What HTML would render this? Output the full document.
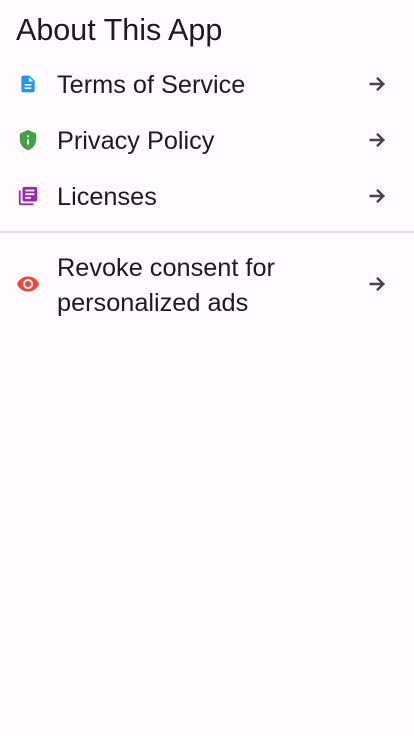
<!DOCTYPE html>
<html><head><style>
body{margin:0;width:414px;height:736px;background:#fffbfe;font-family:"Liberation Sans",sans-serif;color:#1c1b1f;position:relative;overflow:hidden}
.t{position:absolute;white-space:nowrap}
svg{position:absolute}
</style></head><body>
<div class="t" style="left:16px;top:13px;font-size:30.5px;">About This App</div>
<svg style="left:18px;top:74px" width="20" height="20" viewBox="0 0 24 24"><path fill="#2196f3" d="M14 2H6c-1.1 0-2 .9-2 2v16c0 1.1.9 2 2 2h12c1.1 0 2-.9 2-2V8l-6-6zm2 16H8v-2h8v2zm0-4H8v-2h8v2zm-3-5V3.5L18.5 9H13z"/></svg>
<div class="t" style="left:57px;top:71px;font-size:25.3px;">Terms of Service</div>
<svg style="left:17px;top:129px" width="22" height="22" viewBox="0 0 24 24"><path fill="#43a047" d="M12 1L3 5v6c0 5.55 3.84 10.74 9 12 5.16-1.26 9-6.45 9-12V5l-9-4zm1 16h-2v-6h2v6zm0-8h-2V7h2v2z"/></svg>
<div class="t" style="left:57px;top:127px;font-size:25.3px;">Privacy Policy</div>
<svg style="left:17px;top:185px" width="22" height="22" viewBox="0 0 24 24"><path fill="#9c27b0" d="M4 6H2v14c0 1.1.9 2 2 2h14v-2H4V6zm16-4H8c-1.1 0-2 .9-2 2v12c0 1.1.9 2 2 2h12c1.1 0 2-.9 2-2V4c0-1.1-.9-2-2-2zm-1 9H9V9h10v2zm-4 4H9v-2h6v2zm4-8H9V5h10v2z"/></svg>
<div class="t" style="left:57px;top:183px;font-size:25.3px;">Licenses</div>
<div style="position:absolute;left:0;top:231px;width:414px;height:2px;background:#e0dde2"></div>
<svg style="left:16px;top:272px" width="24" height="24" viewBox="0 0 24 24"><path fill="#f44336" d="M12 4.5C7 4.5 2.73 7.61 1 12c1.73 4.39 6 7.5 11 7.5s9.27-3.11 11-7.5c-1.73-4.39-6-7.5-11-7.5zM12 17c-2.76 0-5-2.24-5-5s2.24-5 5-5 5 2.24 5 5-2.24 5-5 5zm0-8c-1.66 0-3 1.34-3 3s1.34 3 3 3 3-1.34 3-3-1.34-3-3-3z"/></svg>
<div class="t" style="left:57px;top:251px;font-size:25.3px;line-height:35px;">Revoke consent for<br>personalized ads</div>
<svg style="left:367px;top:74px" width="20" height="20" viewBox="0 0 24 24"><path fill="none" stroke="#47464f" stroke-width="3" d="M3 12h16M12 4.5l7.5 7.5-7.5 7.5"/></svg>
<svg style="left:367px;top:130px" width="20" height="20" viewBox="0 0 24 24"><path fill="none" stroke="#47464f" stroke-width="3" d="M3 12h16M12 4.5l7.5 7.5-7.5 7.5"/></svg>
<svg style="left:367px;top:186px" width="20" height="20" viewBox="0 0 24 24"><path fill="none" stroke="#47464f" stroke-width="3" d="M3 12h16M12 4.5l7.5 7.5-7.5 7.5"/></svg>
<svg style="left:367px;top:274px" width="20" height="20" viewBox="0 0 24 24"><path fill="none" stroke="#47464f" stroke-width="3" d="M3 12h16M12 4.5l7.5 7.5-7.5 7.5"/></svg>
</body></html>
